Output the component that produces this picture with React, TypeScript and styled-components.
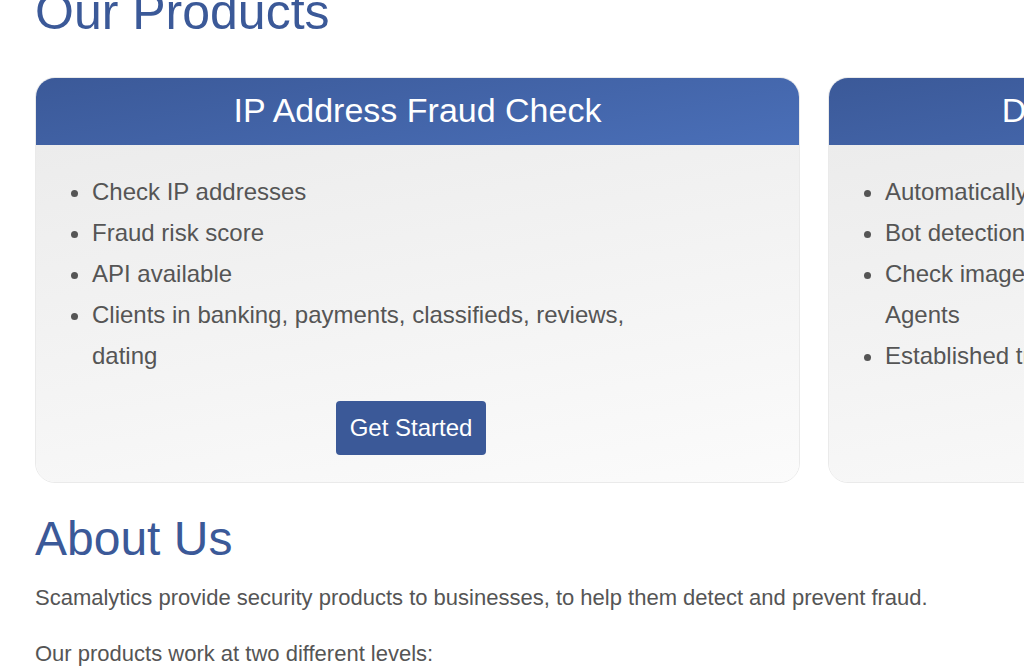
import styled, { createGlobalStyle } from 'styled-components';

const GlobalStyle = createGlobalStyle`
  html, body {
    margin: 0;
    padding: 0;
    background: #fff;
    overflow: hidden;
  }
  body {
    font-family: "Liberation Sans", Arial, sans-serif;
    color: #555;
  }
`;

type Product = {
  title: string;
  points: string[];
};

const products: Product[] = [
  {
    title: 'IP Address Fraud Check',
    points: [
      'Check IP addresses',
      'Fraud risk score',
      'API available',
      'Clients in banking, payments, classifieds, reviews, dating',
    ],
  },
  {
    title: 'Dating Site Fraud Detection',
    points: [
      'Automatically detect scammers',
      'Bot detection and prevention',
      'Check images, messages, IP addresses, emails, User Agents',
      'Established trust and safety tools',
    ],
  },
];

const App = () => {
  return (
    <Page>
      <GlobalStyle />
      <Heading>Our Products</Heading>
      <CardRow>
        {products.map((p) => (
          <Card key={p.title}>
            <CardHeader>{p.title}</CardHeader>
            <CardBody>
              <Points>
                {p.points.map((pt) => (
                  <li key={pt}>{pt}</li>
                ))}
              </Points>
              <Actions>
                <Button href="#">Get Started</Button>
              </Actions>
            </CardBody>
          </Card>
        ))}
      </CardRow>
      <AboutHeading>About Us</AboutHeading>
      <Text>Scamalytics provide security products to businesses, to help them detect and prevent fraud.</Text>
      <Text>Our products work at two different levels:</Text>
    </Page>
  );
};

export default App;

const Page = styled.div`
  padding-left: 35px;
  width: 2000px;
`;

const Heading = styled.h2`
  font-size: 50px;
  font-weight: 400;
  line-height: 1.15;
  color: #3b5998;
  margin: -16px 0 0;
`;

const AboutHeading = styled(Heading)`
  font-size: 48px;
  margin: 28px 0 14px;
`;

const CardRow = styled.div`
  display: flex;
  align-items: stretch;
  gap: 28px;
  margin-top: 35px;
`;

const Card = styled.div`
  width: 765px;
  flex: none;
  display: flex;
  flex-direction: column;
  border-radius: 20px;
  overflow: hidden;
  border: 1px solid #eaeaea;
  box-sizing: border-box;
`;

const CardHeader = styled.div`
  height: 68px;
  margin: -1px -1px 0;
  display: flex;
  align-items: center;
  justify-content: center;
  background: linear-gradient(170deg, #3b5998 0%, #4a6fb8 100%);
  color: #fff;
  font-size: 34px;
  white-space: nowrap;
`;

const CardBody = styled.div`
  flex: 1;
  background: linear-gradient(170deg, #ececec 0%, #fbfbfb 100%);
  padding: 26px 48px 27px 35px;
`;

const Points = styled.ul`
  margin: 0;
  padding: 0 80px 0 21px;
  font-size: 24px;
  line-height: 41px;
  color: #555;
`;

const Actions = styled.div`
  text-align: center;
  margin-top: 25px;
`;

const Button = styled.a`
  display: inline-block;
  padding: 13px 14px;
  background-color: #3b5998;
  color: #fff;
  font-size: 24px;
  border-radius: 4px;
  text-decoration: none;
`;

const Text = styled.p`
  font-size: 22px;
  line-height: 36px;
  margin: 0 0 20px;
  color: #555;
`;
